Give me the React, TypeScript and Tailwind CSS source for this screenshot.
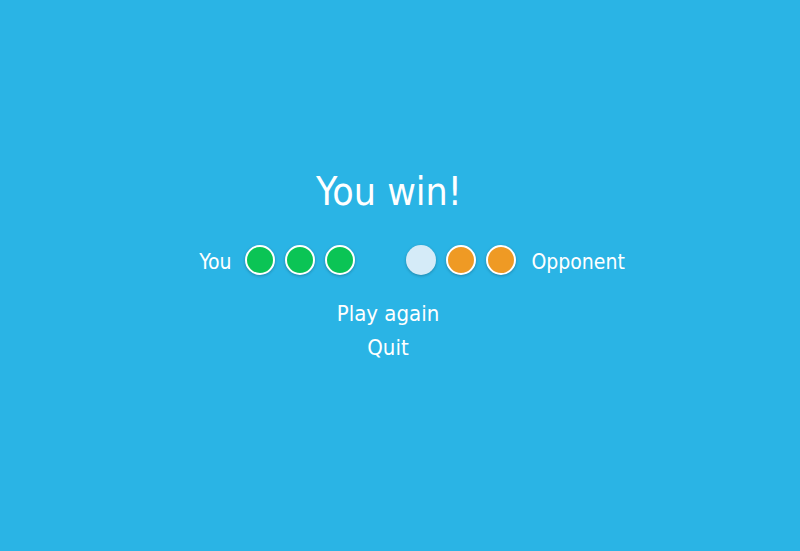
import React from "react";

const Dot = ({ color, border = true }: { color: string; border?: boolean }) => (
  <div
    className={`w-[30px] h-[30px] rounded-full shadow-[0_1px_3px_rgba(0,0,0,0.25)] ${border ? "border-2 border-white" : ""}`}
    style={{ backgroundColor: color }}
  />
);

export default function App() {
  return (
    <div
      className="w-[800px] h-[551px] bg-[#2ab4e5] text-white flex flex-col items-center pr-[24px]"
      style={{ fontFamily: '"DejaVu Sans Condensed", "DejaVu Sans", sans-serif' }}
    >
      <div className="mt-[168px] text-[39px] leading-[48px] ml-[2px]">You win!</div>
      <div className="mt-[26px] ml-[48px] flex items-center h-[36px]">
        <span className="text-[21px] mr-[14px] mt-[6px]">You</span>
        <div className="flex gap-[10px]">
          <Dot color="#0bc455" />
          <Dot color="#0bc455" />
          <Dot color="#0bc455" />
        </div>
        <div className="w-[51px]" />
        <div className="flex gap-[10px]">
          <Dot color="#d5ebf8" border={false} />
          <Dot color="#ef9a24" />
          <Dot color="#ef9a24" />
        </div>
        <span className="text-[21px] ml-[15px] mt-[6px]">Opponent</span>
      </div>
      <div className="mt-[19px] text-[22px] leading-[34px]">Play again</div>
      <div className="text-[22px] leading-[34px]">Quit</div>
    </div>
  );
}
